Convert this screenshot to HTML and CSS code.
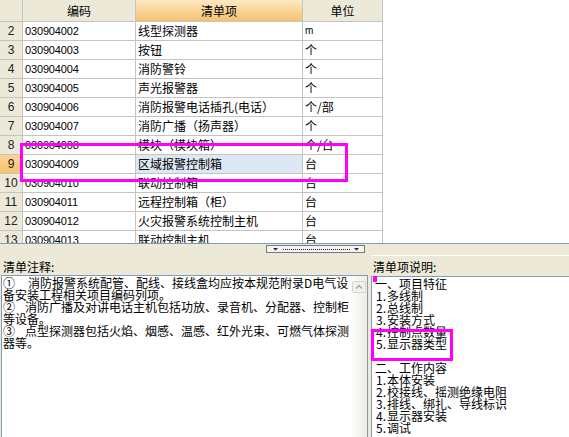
FILE: index.html
```html
<!DOCTYPE html>
<html lang="zh-CN">
<head>
<meta charset="utf-8">
<title>清单</title>
<link rel="stylesheet" href="styles.css">
</head>
<body>
<div class="page">
  <div class="grid-area">
    <div class="grid">
      <div class="c h"></div><div class="c h">编码</div><div class="c h sel">清单项</div><div class="c h">单位</div>

      <div class="c n">2</div><div class="c code">030904002</div><div class="c">线型探测器</div><div class="c unit-m">m</div>
      <div class="c n">3</div><div class="c code">030904003</div><div class="c">按钮</div><div class="c">个</div>
      <div class="c n">4</div><div class="c code">030904004</div><div class="c">消防警铃</div><div class="c">个</div>
      <div class="c n">5</div><div class="c code">030904005</div><div class="c">声光报警器</div><div class="c">个</div>
      <div class="c n">6</div><div class="c code">030904006</div><div class="c">消防报警电话插孔(电话）</div><div class="c">个/部</div>
      <div class="c n">7</div><div class="c code">030904007</div><div class="c">消防广播（扬声器）</div><div class="c">个</div>
      <div class="c n">8</div><div class="c code">030904008</div><div class="c">模块（模块箱）</div><div class="c">个/台</div>
      <div class="c n sel">9</div><div class="c code">030904009</div><div class="c hl">区域报警控制箱</div><div class="c">台</div>
      <div class="c n">10</div><div class="c code">030904010</div><div class="c">联动控制箱</div><div class="c">台</div>
      <div class="c n">11</div><div class="c code">030904011</div><div class="c">远程控制箱（柜）</div><div class="c">台</div>
      <div class="c n">12</div><div class="c code">030904012</div><div class="c">火灾报警系统控制主机</div><div class="c">台</div>
      <div class="c n">13</div><div class="c code">030904013</div><div class="c">联动控制主机</div><div class="c">台</div>
    </div>
  </div>

  <div class="splitter">
    <div class="split-btn">
      <svg width="97" height="6" viewBox="0 0 97 6">
        <polygon points="6,2 11,2 8.5,4.6" fill="#0a246a"/>
        <line x1="16" y1="3.5" x2="84" y2="3.5" stroke="#0a246a" stroke-width="1" stroke-dasharray="1 1"/>
        <polygon points="87,2 92,2 89.5,4.6" fill="#0a246a"/>
      </svg>
    </div>
  </div>

  <div class="panels">
    <div class="panel left">
      <div class="label">清单注释:</div>
      <div class="box">
        <div class="text"><span class="mk1">①</span>消防报警系统配管、配线、接线盒均应按本规范附录D电气设<br>备安装工程相关项目编码列项。<br><span class="mk">②</span>消防广播及对讲电话主机包括功放、录音机、分配器、控制柜<br>等设备。<br><span class="mk">③</span>点型探测器包括火焰、烟感、温感、红外光束、可燃气体探测<br>器等。</div>
        <div class="scroll">
          <div class="up">
            <svg width="14" height="12" viewBox="0 0 14 12">
              <rect x="0.5" y="0.5" width="13" height="11" rx="1" fill="#f1f0ea" stroke="#d6d5cd"/>
              <polyline points="4,7.5 7,4.5 10,7.5" fill="none" stroke="#a8a8a0" stroke-width="1.5"/>
            </svg>
          </div>
        </div>
      </div>
    </div>
    <div class="panel right">
      <div class="label">清单项说明:</div>
      <div class="box">
        <div class="text">一、项目特征<br><span class="num">1.</span>多线制<br><span class="num">2.</span>总线制<br><span class="num">3.</span>安装方式<br><span class="num">4.</span>控制点数量<br><span class="num">5.</span>显示器类型<br><br>二、工作内容<br><span class="num">1.</span>本体安装<br><span class="num">2.</span>校接线、摇测绝缘电阻<br><span class="num">3.</span>排线、绑扎、导线标识<br><span class="num">4.</span>显示器安装<br><span class="num">5.</span>调试</div>
      </div>
    </div>
  </div>

  <div class="mark mark-row"></div>
  <div class="mark mark-desc"></div>
  <div class="caret"></div>
</div>
</body>
</html>
```

FILE: styles.css
```css
body {
  margin: 0;
  background: #ece9d8;
  font-family: "Noto Sans CJK SC", "Noto Sans", sans-serif;
  font-size: 12px;
  color: #000;
}

.page {
  position: relative;
  width: 569px;
  height: 437px;
  overflow: hidden;
}

/* ---------- grid ---------- */
.grid-area {
  height: 243px;
  background: #fff;
  border-bottom: 1px solid #7f9db9;
  overflow: hidden;
}

.grid {
  display: grid;
  grid-template-columns: 23px 113px 167px 80px;
  grid-template-rows: 22px;
  grid-auto-rows: 19px;
  width: 383px;
}

.c {
  box-sizing: border-box;
  border-right: 1px solid #c4c4c4;
  border-bottom: 1px solid #c4c4c4;
  padding-left: 2px;
  line-height: 18px;
  white-space: nowrap;
  overflow: hidden;
}

.h {
  background: #ece9d8;
  text-align: center;
  line-height: 21px;
  padding: 0;
}

.h.sel {
  background: linear-gradient(#fde9c3, #f5c26e);
}

.n {
  background: #ece9d8;
  text-align: center;
  padding: 0;
  font-family: "Liberation Sans", sans-serif;
  font-size: 12px;
  color: #222;
}

.n.sel {
  background: linear-gradient(#fbd699, #f6c068);
}

.code {
  font-family: "Liberation Sans", sans-serif;
  font-size: 11px;
  letter-spacing: -0.15px;
}

.unit-m {
  font-family: "Liberation Sans", sans-serif;
  font-size: 10px;
}

.hl {
  background: #dde8f5;
}

/* ---------- splitter ---------- */
.splitter {
  height: 10px;
}

.split-btn {
  box-sizing: border-box;
  margin-left: 266px;
  margin-top: 1px;
  width: 99px;
  height: 8px;
  border: 1px solid #7a7a7a;
  background: #f5f4ef;
  display: flex;
}

/* ---------- panels ---------- */
.panels {
  display: flex;
  height: 183px;
}

.panel {
  display: flex;
  flex-direction: column;
}

.panel.left {
  width: 368px;
  padding-top: 1px;
}

.panel.right {
  flex: 1;
  margin-left: 3px;
  border-top: 1px solid #fff;
}

.label {
  padding-left: 3px;
  line-height: 22px;
  overflow: hidden;
  white-space: nowrap;
}

.left .label {
  height: 19px;
}

.right .label {
  height: 20px;
  padding-left: 2px;
}

.box {
  flex: 1;
  display: flex;
  background: #fff;
  border-top: 1px solid #7f9db9;
  border-left: 1px solid #7f9db9;
}

.left .box {
  margin-left: 1px;
  border-right: 1px solid #8e9aa6;
}

.text {
  flex: 1;
  line-height: 12px;
  white-space: nowrap;
  overflow: hidden;
}

.left .text {
  padding: 1px 0 0 1px;
}

.right .text {
  padding: 1px 0 0 3px;
}

.mk1 {
  display: inline-block;
  width: 25px;
}

.mk {
  display: inline-block;
  width: 22px;
}

.num {
  display: inline-block;
  width: 12px;
  padding-left: 1px;
  box-sizing: border-box;
}

.scroll {
  width: 16px;
  padding-top: 5px;
  background: linear-gradient(to right, #fefefe, #ecebe4);
}

.up {
  margin-left: 1px;
  width: 14px;
  height: 12px;
  display: flex;
}

/* ---------- annotation overlays ---------- */
.mark {
  position: absolute;
  box-sizing: border-box;
  border: 3px solid #ff00ff;
}

.mark-row {
  left: 20px;
  top: 143px;
  width: 328px;
  height: 39px;
}

.mark-desc {
  left: 371px;
  top: 329px;
  width: 82px;
  height: 32px;
}

.caret {
  position: absolute;
  left: 373px;
  top: 276px;
  width: 4px;
  height: 6px;
  background: #ff00ff;
}
```
